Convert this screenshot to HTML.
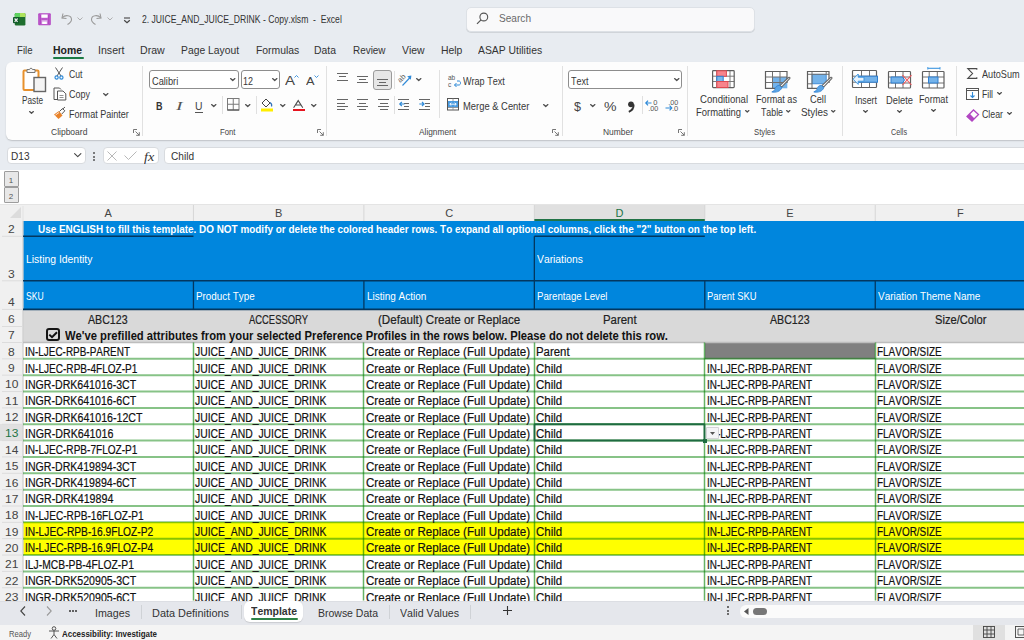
<!DOCTYPE html>
<html><head><meta charset="utf-8"><style>
html,body{margin:0;padding:0;width:1024px;height:640px;overflow:hidden;background:#e8ecf1;}
body{position:relative;font-family:"Liberation Sans",sans-serif;font-kerning:none;}
.t{position:absolute;white-space:nowrap;transform-origin:0 0;}
.b{position:absolute;box-sizing:border-box;}
svg.b{overflow:visible;}
</style></head><body>
<div class="b" style="left:0.00px;top:169.50px;width:1024.00px;height:431.00px;background:#fff"></div>
<div class="b" style="left:23.00px;top:221.00px;width:1001.00px;height:88.40px;background:#0086dd"></div>
<div class="b" style="left:23.00px;top:309.40px;width:1001.00px;height:33.10px;background:#d9d9d9"></div>
<div class="b" style="left:704.80px;top:342.50px;width:170.45px;height:16.35px;background:#808080"></div>
<div class="b" style="left:23.00px;top:522.35px;width:1001.00px;height:32.70px;background:#ffff00"></div>
<div class="b" style="left:0.00px;top:204.00px;width:1024.00px;height:17.00px;background:#f0f0f0"></div>
<div class="b" style="left:534.35px;top:204.00px;width:170.45px;height:17.00px;background:#e0e0e0"></div>
<div class="b" style="left:0.00px;top:221.00px;width:23.00px;height:379.50px;background:#f0f0f0"></div>
<div class="b" style="left:0.00px;top:424.25px;width:23.00px;height:16.35px;background:#e0e0e0"></div>
<svg class="b" style="left:0;top:0" width="1024" height="640"><line x1="193.45" y1="205.00" x2="193.45" y2="221.00" stroke="#d6d6d6" stroke-width="1.00"/><line x1="363.90" y1="205.00" x2="363.90" y2="221.00" stroke="#d6d6d6" stroke-width="1.00"/><line x1="534.35" y1="205.00" x2="534.35" y2="221.00" stroke="#d6d6d6" stroke-width="1.00"/><line x1="704.80" y1="205.00" x2="704.80" y2="221.00" stroke="#d6d6d6" stroke-width="1.00"/><line x1="875.25" y1="205.00" x2="875.25" y2="221.00" stroke="#d6d6d6" stroke-width="1.00"/><line x1="23.00" y1="221.00" x2="23.00" y2="600.50" stroke="#cfcfcf" stroke-width="1.30"/><line x1="23.00" y1="206.00" x2="23.00" y2="221.00" stroke="#e2e2e2" stroke-width="1.00"/><line x1="0.00" y1="204.50" x2="1024.00" y2="204.50" stroke="#e4e4e4" stroke-width="1.00"/><line x1="2.00" y1="236.30" x2="23.00" y2="236.30" stroke="#dcdcdc" stroke-width="1.00"/><line x1="2.00" y1="280.80" x2="23.00" y2="280.80" stroke="#dcdcdc" stroke-width="1.00"/><line x1="2.00" y1="309.40" x2="23.00" y2="309.40" stroke="#dcdcdc" stroke-width="1.00"/><line x1="2.00" y1="326.50" x2="23.00" y2="326.50" stroke="#dcdcdc" stroke-width="1.00"/><line x1="2.00" y1="342.50" x2="23.00" y2="342.50" stroke="#dcdcdc" stroke-width="1.00"/><line x1="2.00" y1="358.85" x2="23.00" y2="358.85" stroke="#dcdcdc" stroke-width="1.00"/><line x1="2.00" y1="375.20" x2="23.00" y2="375.20" stroke="#dcdcdc" stroke-width="1.00"/><line x1="2.00" y1="391.55" x2="23.00" y2="391.55" stroke="#dcdcdc" stroke-width="1.00"/><line x1="2.00" y1="407.90" x2="23.00" y2="407.90" stroke="#dcdcdc" stroke-width="1.00"/><line x1="2.00" y1="424.25" x2="23.00" y2="424.25" stroke="#dcdcdc" stroke-width="1.00"/><line x1="2.00" y1="440.60" x2="23.00" y2="440.60" stroke="#dcdcdc" stroke-width="1.00"/><line x1="2.00" y1="456.95" x2="23.00" y2="456.95" stroke="#dcdcdc" stroke-width="1.00"/><line x1="2.00" y1="473.30" x2="23.00" y2="473.30" stroke="#dcdcdc" stroke-width="1.00"/><line x1="2.00" y1="489.65" x2="23.00" y2="489.65" stroke="#dcdcdc" stroke-width="1.00"/><line x1="2.00" y1="506.00" x2="23.00" y2="506.00" stroke="#dcdcdc" stroke-width="1.00"/><line x1="2.00" y1="522.35" x2="23.00" y2="522.35" stroke="#dcdcdc" stroke-width="1.00"/><line x1="2.00" y1="538.70" x2="23.00" y2="538.70" stroke="#dcdcdc" stroke-width="1.00"/><line x1="2.00" y1="555.05" x2="23.00" y2="555.05" stroke="#dcdcdc" stroke-width="1.00"/><line x1="2.00" y1="571.40" x2="23.00" y2="571.40" stroke="#dcdcdc" stroke-width="1.00"/><line x1="2.00" y1="587.75" x2="23.00" y2="587.75" stroke="#dcdcdc" stroke-width="1.00"/><line x1="2.00" y1="604.10" x2="23.00" y2="604.10" stroke="#dcdcdc" stroke-width="1.00"/><line x1="23.00" y1="236.30" x2="193.45" y2="236.30" stroke="#03375f" stroke-width="1.40"/><line x1="534.35" y1="236.30" x2="704.80" y2="236.30" stroke="#03375f" stroke-width="1.40"/><line x1="534.35" y1="236.30" x2="534.35" y2="280.80" stroke="#03375f" stroke-width="1.30"/><line x1="23.00" y1="280.80" x2="1024.00" y2="280.80" stroke="#03375f" stroke-width="1.40"/><line x1="23.00" y1="309.40" x2="1024.00" y2="309.40" stroke="#03375f" stroke-width="1.60"/><line x1="193.45" y1="280.80" x2="193.45" y2="309.40" stroke="#03375f" stroke-width="1.30"/><line x1="363.90" y1="280.80" x2="363.90" y2="309.40" stroke="#03375f" stroke-width="1.30"/><line x1="534.35" y1="280.80" x2="534.35" y2="309.40" stroke="#03375f" stroke-width="1.30"/><line x1="704.80" y1="280.80" x2="704.80" y2="309.40" stroke="#03375f" stroke-width="1.30"/><line x1="875.25" y1="280.80" x2="875.25" y2="309.40" stroke="#03375f" stroke-width="1.30"/><line x1="23.00" y1="342.50" x2="1024.00" y2="342.50" stroke="#bdbdbd" stroke-width="1.60"/><line x1="23.00" y1="358.85" x2="1024.00" y2="358.85" stroke="rgba(0,128,0,0.47)" stroke-width="2.00"/><line x1="23.00" y1="375.20" x2="1024.00" y2="375.20" stroke="rgba(0,128,0,0.47)" stroke-width="2.00"/><line x1="23.00" y1="391.55" x2="1024.00" y2="391.55" stroke="rgba(0,128,0,0.47)" stroke-width="2.00"/><line x1="23.00" y1="407.90" x2="1024.00" y2="407.90" stroke="rgba(0,128,0,0.47)" stroke-width="2.00"/><line x1="23.00" y1="424.25" x2="1024.00" y2="424.25" stroke="rgba(0,128,0,0.47)" stroke-width="2.00"/><line x1="23.00" y1="440.60" x2="1024.00" y2="440.60" stroke="rgba(0,128,0,0.47)" stroke-width="2.00"/><line x1="23.00" y1="456.95" x2="1024.00" y2="456.95" stroke="rgba(0,128,0,0.47)" stroke-width="2.00"/><line x1="23.00" y1="473.30" x2="1024.00" y2="473.30" stroke="rgba(0,128,0,0.47)" stroke-width="2.00"/><line x1="23.00" y1="489.65" x2="1024.00" y2="489.65" stroke="rgba(0,128,0,0.47)" stroke-width="2.00"/><line x1="23.00" y1="506.00" x2="1024.00" y2="506.00" stroke="rgba(0,128,0,0.47)" stroke-width="2.00"/><line x1="23.00" y1="522.35" x2="1024.00" y2="522.35" stroke="rgba(0,128,0,0.47)" stroke-width="2.00"/><line x1="23.00" y1="538.70" x2="1024.00" y2="538.70" stroke="rgba(0,128,0,0.47)" stroke-width="2.00"/><line x1="23.00" y1="555.05" x2="1024.00" y2="555.05" stroke="rgba(0,128,0,0.47)" stroke-width="2.00"/><line x1="23.00" y1="571.40" x2="1024.00" y2="571.40" stroke="rgba(0,128,0,0.47)" stroke-width="2.00"/><line x1="23.00" y1="587.75" x2="1024.00" y2="587.75" stroke="rgba(0,128,0,0.47)" stroke-width="2.00"/><line x1="23.00" y1="604.10" x2="1024.00" y2="604.10" stroke="rgba(0,128,0,0.47)" stroke-width="2.00"/><line x1="193.50" y1="342.50" x2="193.50" y2="600.50" stroke="rgba(0,128,0,0.6)" stroke-width="1.50"/><line x1="363.50" y1="342.50" x2="363.50" y2="600.50" stroke="rgba(0,128,0,0.6)" stroke-width="1.50"/><line x1="534.50" y1="342.50" x2="534.50" y2="600.50" stroke="rgba(0,128,0,0.6)" stroke-width="1.50"/><line x1="704.50" y1="342.50" x2="704.50" y2="600.50" stroke="rgba(0,128,0,0.6)" stroke-width="1.50"/><line x1="875.50" y1="342.50" x2="875.50" y2="600.50" stroke="rgba(0,128,0,0.6)" stroke-width="1.50"/><line x1="534.35" y1="220.00" x2="704.80" y2="220.00" stroke="#217346" stroke-width="2.00"/><line x1="534.35" y1="424.25" x2="704.80" y2="424.25" stroke="#1e6b41" stroke-width="2.00"/><line x1="534.35" y1="440.60" x2="704.80" y2="440.60" stroke="#1e6b41" stroke-width="2.00"/><line x1="534.50" y1="424.25" x2="534.50" y2="440.60" stroke="#1e6b41" stroke-width="1.80"/><line x1="704.50" y1="424.25" x2="704.50" y2="440.60" stroke="#1e6b41" stroke-width="1.80"/></svg>
<div class="b" style="left:702.50px;top:438.60px;width:4.00px;height:4.00px;background:#1e6b41"></div>
<div class="t" style="left:104.56px;top:208.49px;font-size:11.00px;line-height:11.00px;color:#444;font-weight:normal;">A</div>
<div class="t" style="left:275.01px;top:208.49px;font-size:11.00px;line-height:11.00px;color:#444;font-weight:normal;">B</div>
<div class="t" style="left:445.15px;top:208.49px;font-size:11.00px;line-height:11.00px;color:#444;font-weight:normal;">C</div>
<div class="t" style="left:615.60px;top:208.49px;font-size:11.00px;line-height:11.00px;color:#217346;font-weight:normal;">D</div>
<div class="t" style="left:786.36px;top:208.49px;font-size:11.00px;line-height:11.00px;color:#444;font-weight:normal;">E</div>
<div class="t" style="left:957.12px;top:208.49px;font-size:11.00px;line-height:11.00px;color:#444;font-weight:normal;">F</div>
<div class="t" style="left:8.45px;top:224.16px;font-size:11.50px;line-height:11.50px;color:#444;font-weight:normal;transform:scaleX(1.0460);">2</div>
<div class="t" style="left:8.45px;top:268.66px;font-size:11.50px;line-height:11.50px;color:#444;font-weight:normal;transform:scaleX(1.0460);">3</div>
<div class="t" style="left:8.45px;top:297.26px;font-size:11.50px;line-height:11.50px;color:#444;font-weight:normal;transform:scaleX(1.0460);">4</div>
<div class="t" style="left:8.45px;top:314.36px;font-size:11.50px;line-height:11.50px;color:#444;font-weight:normal;transform:scaleX(1.0460);">6</div>
<div class="t" style="left:8.45px;top:330.36px;font-size:11.50px;line-height:11.50px;color:#444;font-weight:normal;transform:scaleX(1.0460);">7</div>
<div class="t" style="left:8.45px;top:346.71px;font-size:11.50px;line-height:11.50px;color:#444;font-weight:normal;transform:scaleX(1.0460);">8</div>
<div class="t" style="left:8.45px;top:363.06px;font-size:11.50px;line-height:11.50px;color:#444;font-weight:normal;transform:scaleX(1.0460);">9</div>
<div class="t" style="left:5.11px;top:379.41px;font-size:11.50px;line-height:11.50px;color:#444;font-weight:normal;transform:scaleX(1.0460);">10</div>
<div class="t" style="left:5.11px;top:395.76px;font-size:11.50px;line-height:11.50px;color:#444;font-weight:normal;transform:scaleX(1.0460);">11</div>
<div class="t" style="left:5.11px;top:412.11px;font-size:11.50px;line-height:11.50px;color:#444;font-weight:normal;transform:scaleX(1.0460);">12</div>
<div class="t" style="left:5.11px;top:428.46px;font-size:11.50px;line-height:11.50px;color:#217346;font-weight:normal;transform:scaleX(1.0460);">13</div>
<div class="t" style="left:5.11px;top:444.81px;font-size:11.50px;line-height:11.50px;color:#444;font-weight:normal;transform:scaleX(1.0460);">14</div>
<div class="t" style="left:5.11px;top:461.16px;font-size:11.50px;line-height:11.50px;color:#444;font-weight:normal;transform:scaleX(1.0460);">15</div>
<div class="t" style="left:5.11px;top:477.51px;font-size:11.50px;line-height:11.50px;color:#444;font-weight:normal;transform:scaleX(1.0460);">16</div>
<div class="t" style="left:5.11px;top:493.86px;font-size:11.50px;line-height:11.50px;color:#444;font-weight:normal;transform:scaleX(1.0460);">17</div>
<div class="t" style="left:5.11px;top:510.21px;font-size:11.50px;line-height:11.50px;color:#444;font-weight:normal;transform:scaleX(1.0460);">18</div>
<div class="t" style="left:5.11px;top:526.56px;font-size:11.50px;line-height:11.50px;color:#444;font-weight:normal;transform:scaleX(1.0460);">19</div>
<div class="t" style="left:5.11px;top:542.91px;font-size:11.50px;line-height:11.50px;color:#444;font-weight:normal;transform:scaleX(1.0460);">20</div>
<div class="t" style="left:5.11px;top:559.26px;font-size:11.50px;line-height:11.50px;color:#444;font-weight:normal;transform:scaleX(1.0460);">21</div>
<div class="t" style="left:5.11px;top:575.61px;font-size:11.50px;line-height:11.50px;color:#444;font-weight:normal;transform:scaleX(1.0460);">22</div>
<div class="t" style="left:5.11px;top:591.96px;font-size:11.50px;line-height:11.50px;color:#444;font-weight:normal;transform:scaleX(1.0460);">23</div>
<svg class="b" style="left:9.00px;top:207.00px" width="13" height="12" viewBox="0 0 13 12"><path d="M12 0 L12 11 L1 11 Z" fill="#dcdcdc"/></svg>
<div class="t" style="left:38.00px;top:225.16px;font-size:10.20px;line-height:10.20px;color:#fff;font-weight:bold;transform:scaleX(0.9744);">Use ENGLISH to fill this template. DO NOT modify or delete the colored header rows. To expand all optional columns, click the &quot;2&quot; button on the top left.</div>
<div class="t" style="left:25.50px;top:254.66px;font-size:10.20px;line-height:10.20px;color:#fff;font-weight:normal;transform:scaleX(1.0199);">Listing Identity</div>
<div class="t" style="left:537.00px;top:254.66px;font-size:10.20px;line-height:10.20px;color:#fff;font-weight:normal;transform:scaleX(1.0142);">Variations</div>
<div class="t" style="left:25.60px;top:292.16px;font-size:10.20px;line-height:10.20px;color:#fff;font-weight:normal;transform:scaleX(0.8423);">SKU</div>
<div class="t" style="left:196.05px;top:292.16px;font-size:10.20px;line-height:10.20px;color:#fff;font-weight:normal;transform:scaleX(0.9685);">Product Type</div>
<div class="t" style="left:366.50px;top:292.16px;font-size:10.20px;line-height:10.20px;color:#fff;font-weight:normal;transform:scaleX(0.9785);">Listing Action</div>
<div class="t" style="left:536.95px;top:292.16px;font-size:10.20px;line-height:10.20px;color:#fff;font-weight:normal;transform:scaleX(0.9496);">Parentage Level</div>
<div class="t" style="left:707.40px;top:292.16px;font-size:10.20px;line-height:10.20px;color:#fff;font-weight:normal;transform:scaleX(0.9206);">Parent SKU</div>
<div class="t" style="left:877.85px;top:292.16px;font-size:10.20px;line-height:10.20px;color:#fff;font-weight:normal;transform:scaleX(0.9770);">Variation Theme Name</div>
<div class="t" style="left:88.45px;top:313.64px;font-size:12.00px;line-height:12.00px;color:#222;font-weight:normal;transform:scaleX(0.8848);-webkit-text-stroke:0.2px #222;">ABC123</div>
<div class="t" style="left:249.14px;top:313.64px;font-size:12.00px;line-height:12.00px;color:#222;font-weight:normal;transform:scaleX(0.7839);-webkit-text-stroke:0.2px #222;">ACCESSORY</div>
<div class="t" style="left:378.02px;top:313.64px;font-size:12.00px;line-height:12.00px;color:#222;font-weight:normal;transform:scaleX(0.9691);-webkit-text-stroke:0.2px #222;">(Default) Create or Replace</div>
<div class="t" style="left:602.75px;top:313.64px;font-size:12.00px;line-height:12.00px;color:#222;font-weight:normal;transform:scaleX(0.9515);-webkit-text-stroke:0.2px #222;">Parent</div>
<div class="t" style="left:770.25px;top:313.64px;font-size:12.00px;line-height:12.00px;color:#222;font-weight:normal;transform:scaleX(0.8848);-webkit-text-stroke:0.2px #222;">ABC123</div>
<div class="t" style="left:934.74px;top:313.64px;font-size:12.00px;line-height:12.00px;color:#222;font-weight:normal;transform:scaleX(0.9298);-webkit-text-stroke:0.2px #222;">Size/Color</div>
<div class="b" style="left:45.80px;top:328.30px;width:14.20px;height:12.60px;border:2px solid #151515;border-radius:3px"></div>
<svg class="b" style="left:47.00px;top:329.50px" width="12" height="10" viewBox="0 0 12 10"><path d="M2.3 4.6 L5 7.2 L10 2.2" fill="none" stroke="#111" stroke-width="2"/></svg>
<div class="t" style="left:65.00px;top:329.94px;font-size:12.00px;line-height:12.00px;color:#111;font-weight:bold;transform:scaleX(0.9348);">We&#x27;ve prefilled attributes from your selected Preference Profiles in the rows below. Please do not delete this row.</div>
<div class="t" style="left:24.90px;top:346.29px;font-size:12.00px;line-height:12.00px;color:#111;font-weight:normal;transform:scaleX(0.8289);-webkit-text-stroke:0.2px #111;">IN-LJEC-RPB-PARENT</div>
<div class="t" style="left:195.35px;top:346.29px;font-size:12.00px;line-height:12.00px;color:#111;font-weight:normal;transform:scaleX(0.8643);-webkit-text-stroke:0.2px #111;">JUICE_AND_JUICE_DRINK</div>
<div class="t" style="left:365.80px;top:346.29px;font-size:12.00px;line-height:12.00px;color:#111;font-weight:normal;transform:scaleX(0.9643);-webkit-text-stroke:0.2px #111;">Create or Replace (Full Update)</div>
<div class="t" style="left:536.25px;top:346.29px;font-size:12.00px;line-height:12.00px;color:#111;font-weight:normal;transform:scaleX(0.9515);-webkit-text-stroke:0.2px #111;">Parent</div>
<div class="t" style="left:877.15px;top:346.29px;font-size:12.00px;line-height:12.00px;color:#111;font-weight:normal;transform:scaleX(0.8293);-webkit-text-stroke:0.2px #111;">FLAVOR/SIZE</div>
<div class="t" style="left:24.90px;top:362.64px;font-size:12.00px;line-height:12.00px;color:#111;font-weight:normal;transform:scaleX(0.8386);-webkit-text-stroke:0.2px #111;">IN-LJEC-RPB-4FLOZ-P1</div>
<div class="t" style="left:195.35px;top:362.64px;font-size:12.00px;line-height:12.00px;color:#111;font-weight:normal;transform:scaleX(0.8643);-webkit-text-stroke:0.2px #111;">JUICE_AND_JUICE_DRINK</div>
<div class="t" style="left:365.80px;top:362.64px;font-size:12.00px;line-height:12.00px;color:#111;font-weight:normal;transform:scaleX(0.9643);-webkit-text-stroke:0.2px #111;">Create or Replace (Full Update)</div>
<div class="t" style="left:536.25px;top:362.64px;font-size:12.00px;line-height:12.00px;color:#111;font-weight:normal;transform:scaleX(0.9581);-webkit-text-stroke:0.2px #111;">Child</div>
<div class="t" style="left:706.70px;top:362.64px;font-size:12.00px;line-height:12.00px;color:#111;font-weight:normal;transform:scaleX(0.8289);-webkit-text-stroke:0.2px #111;">IN-LJEC-RPB-PARENT</div>
<div class="t" style="left:877.15px;top:362.64px;font-size:12.00px;line-height:12.00px;color:#111;font-weight:normal;transform:scaleX(0.8293);-webkit-text-stroke:0.2px #111;">FLAVOR/SIZE</div>
<div class="t" style="left:24.90px;top:378.99px;font-size:12.00px;line-height:12.00px;color:#111;font-weight:normal;transform:scaleX(0.8820);-webkit-text-stroke:0.2px #111;">INGR-DRK641016-3CT</div>
<div class="t" style="left:195.35px;top:378.99px;font-size:12.00px;line-height:12.00px;color:#111;font-weight:normal;transform:scaleX(0.8643);-webkit-text-stroke:0.2px #111;">JUICE_AND_JUICE_DRINK</div>
<div class="t" style="left:365.80px;top:378.99px;font-size:12.00px;line-height:12.00px;color:#111;font-weight:normal;transform:scaleX(0.9643);-webkit-text-stroke:0.2px #111;">Create or Replace (Full Update)</div>
<div class="t" style="left:536.25px;top:378.99px;font-size:12.00px;line-height:12.00px;color:#111;font-weight:normal;transform:scaleX(0.9581);-webkit-text-stroke:0.2px #111;">Child</div>
<div class="t" style="left:706.70px;top:378.99px;font-size:12.00px;line-height:12.00px;color:#111;font-weight:normal;transform:scaleX(0.8289);-webkit-text-stroke:0.2px #111;">IN-LJEC-RPB-PARENT</div>
<div class="t" style="left:877.15px;top:378.99px;font-size:12.00px;line-height:12.00px;color:#111;font-weight:normal;transform:scaleX(0.8293);-webkit-text-stroke:0.2px #111;">FLAVOR/SIZE</div>
<div class="t" style="left:24.90px;top:395.34px;font-size:12.00px;line-height:12.00px;color:#111;font-weight:normal;transform:scaleX(0.8830);-webkit-text-stroke:0.2px #111;">INGR-DRK641016-6CT</div>
<div class="t" style="left:195.35px;top:395.34px;font-size:12.00px;line-height:12.00px;color:#111;font-weight:normal;transform:scaleX(0.8643);-webkit-text-stroke:0.2px #111;">JUICE_AND_JUICE_DRINK</div>
<div class="t" style="left:365.80px;top:395.34px;font-size:12.00px;line-height:12.00px;color:#111;font-weight:normal;transform:scaleX(0.9643);-webkit-text-stroke:0.2px #111;">Create or Replace (Full Update)</div>
<div class="t" style="left:536.25px;top:395.34px;font-size:12.00px;line-height:12.00px;color:#111;font-weight:normal;transform:scaleX(0.9581);-webkit-text-stroke:0.2px #111;">Child</div>
<div class="t" style="left:706.70px;top:395.34px;font-size:12.00px;line-height:12.00px;color:#111;font-weight:normal;transform:scaleX(0.8289);-webkit-text-stroke:0.2px #111;">IN-LJEC-RPB-PARENT</div>
<div class="t" style="left:877.15px;top:395.34px;font-size:12.00px;line-height:12.00px;color:#111;font-weight:normal;transform:scaleX(0.8293);-webkit-text-stroke:0.2px #111;">FLAVOR/SIZE</div>
<div class="t" style="left:24.90px;top:411.69px;font-size:12.00px;line-height:12.00px;color:#111;font-weight:normal;transform:scaleX(0.8852);-webkit-text-stroke:0.2px #111;">INGR-DRK641016-12CT</div>
<div class="t" style="left:195.35px;top:411.69px;font-size:12.00px;line-height:12.00px;color:#111;font-weight:normal;transform:scaleX(0.8643);-webkit-text-stroke:0.2px #111;">JUICE_AND_JUICE_DRINK</div>
<div class="t" style="left:365.80px;top:411.69px;font-size:12.00px;line-height:12.00px;color:#111;font-weight:normal;transform:scaleX(0.9643);-webkit-text-stroke:0.2px #111;">Create or Replace (Full Update)</div>
<div class="t" style="left:536.25px;top:411.69px;font-size:12.00px;line-height:12.00px;color:#111;font-weight:normal;transform:scaleX(0.9581);-webkit-text-stroke:0.2px #111;">Child</div>
<div class="t" style="left:706.70px;top:411.69px;font-size:12.00px;line-height:12.00px;color:#111;font-weight:normal;transform:scaleX(0.8289);-webkit-text-stroke:0.2px #111;">IN-LJEC-RPB-PARENT</div>
<div class="t" style="left:877.15px;top:411.69px;font-size:12.00px;line-height:12.00px;color:#111;font-weight:normal;transform:scaleX(0.8293);-webkit-text-stroke:0.2px #111;">FLAVOR/SIZE</div>
<div class="t" style="left:24.90px;top:428.04px;font-size:12.00px;line-height:12.00px;color:#111;font-weight:normal;transform:scaleX(0.8890);-webkit-text-stroke:0.2px #111;">INGR-DRK641016</div>
<div class="t" style="left:195.35px;top:428.04px;font-size:12.00px;line-height:12.00px;color:#111;font-weight:normal;transform:scaleX(0.8643);-webkit-text-stroke:0.2px #111;">JUICE_AND_JUICE_DRINK</div>
<div class="t" style="left:365.80px;top:428.04px;font-size:12.00px;line-height:12.00px;color:#111;font-weight:normal;transform:scaleX(0.9643);-webkit-text-stroke:0.2px #111;">Create or Replace (Full Update)</div>
<div class="t" style="left:536.25px;top:428.04px;font-size:12.00px;line-height:12.00px;color:#111;font-weight:normal;transform:scaleX(0.9581);-webkit-text-stroke:0.2px #111;">Child</div>
<div class="t" style="left:706.70px;top:428.04px;font-size:12.00px;line-height:12.00px;color:#111;font-weight:normal;transform:scaleX(0.8289);-webkit-text-stroke:0.2px #111;">IN-LJEC-RPB-PARENT</div>
<div class="t" style="left:877.15px;top:428.04px;font-size:12.00px;line-height:12.00px;color:#111;font-weight:normal;transform:scaleX(0.8293);-webkit-text-stroke:0.2px #111;">FLAVOR/SIZE</div>
<div class="t" style="left:24.90px;top:444.39px;font-size:12.00px;line-height:12.00px;color:#111;font-weight:normal;transform:scaleX(0.8386);-webkit-text-stroke:0.2px #111;">IN-LJEC-RPB-7FLOZ-P1</div>
<div class="t" style="left:195.35px;top:444.39px;font-size:12.00px;line-height:12.00px;color:#111;font-weight:normal;transform:scaleX(0.8643);-webkit-text-stroke:0.2px #111;">JUICE_AND_JUICE_DRINK</div>
<div class="t" style="left:365.80px;top:444.39px;font-size:12.00px;line-height:12.00px;color:#111;font-weight:normal;transform:scaleX(0.9643);-webkit-text-stroke:0.2px #111;">Create or Replace (Full Update)</div>
<div class="t" style="left:536.25px;top:444.39px;font-size:12.00px;line-height:12.00px;color:#111;font-weight:normal;transform:scaleX(0.9581);-webkit-text-stroke:0.2px #111;">Child</div>
<div class="t" style="left:706.70px;top:444.39px;font-size:12.00px;line-height:12.00px;color:#111;font-weight:normal;transform:scaleX(0.8289);-webkit-text-stroke:0.2px #111;">IN-LJEC-RPB-PARENT</div>
<div class="t" style="left:877.15px;top:444.39px;font-size:12.00px;line-height:12.00px;color:#111;font-weight:normal;transform:scaleX(0.8293);-webkit-text-stroke:0.2px #111;">FLAVOR/SIZE</div>
<div class="t" style="left:24.90px;top:460.74px;font-size:12.00px;line-height:12.00px;color:#111;font-weight:normal;transform:scaleX(0.8820);-webkit-text-stroke:0.2px #111;">INGR-DRK419894-3CT</div>
<div class="t" style="left:195.35px;top:460.74px;font-size:12.00px;line-height:12.00px;color:#111;font-weight:normal;transform:scaleX(0.8643);-webkit-text-stroke:0.2px #111;">JUICE_AND_JUICE_DRINK</div>
<div class="t" style="left:365.80px;top:460.74px;font-size:12.00px;line-height:12.00px;color:#111;font-weight:normal;transform:scaleX(0.9643);-webkit-text-stroke:0.2px #111;">Create or Replace (Full Update)</div>
<div class="t" style="left:536.25px;top:460.74px;font-size:12.00px;line-height:12.00px;color:#111;font-weight:normal;transform:scaleX(0.9581);-webkit-text-stroke:0.2px #111;">Child</div>
<div class="t" style="left:706.70px;top:460.74px;font-size:12.00px;line-height:12.00px;color:#111;font-weight:normal;transform:scaleX(0.8289);-webkit-text-stroke:0.2px #111;">IN-LJEC-RPB-PARENT</div>
<div class="t" style="left:877.15px;top:460.74px;font-size:12.00px;line-height:12.00px;color:#111;font-weight:normal;transform:scaleX(0.8293);-webkit-text-stroke:0.2px #111;">FLAVOR/SIZE</div>
<div class="t" style="left:24.90px;top:477.09px;font-size:12.00px;line-height:12.00px;color:#111;font-weight:normal;transform:scaleX(0.8820);-webkit-text-stroke:0.2px #111;">INGR-DRK419894-6CT</div>
<div class="t" style="left:195.35px;top:477.09px;font-size:12.00px;line-height:12.00px;color:#111;font-weight:normal;transform:scaleX(0.8643);-webkit-text-stroke:0.2px #111;">JUICE_AND_JUICE_DRINK</div>
<div class="t" style="left:365.80px;top:477.09px;font-size:12.00px;line-height:12.00px;color:#111;font-weight:normal;transform:scaleX(0.9643);-webkit-text-stroke:0.2px #111;">Create or Replace (Full Update)</div>
<div class="t" style="left:536.25px;top:477.09px;font-size:12.00px;line-height:12.00px;color:#111;font-weight:normal;transform:scaleX(0.9581);-webkit-text-stroke:0.2px #111;">Child</div>
<div class="t" style="left:706.70px;top:477.09px;font-size:12.00px;line-height:12.00px;color:#111;font-weight:normal;transform:scaleX(0.8289);-webkit-text-stroke:0.2px #111;">IN-LJEC-RPB-PARENT</div>
<div class="t" style="left:877.15px;top:477.09px;font-size:12.00px;line-height:12.00px;color:#111;font-weight:normal;transform:scaleX(0.8293);-webkit-text-stroke:0.2px #111;">FLAVOR/SIZE</div>
<div class="t" style="left:24.90px;top:493.44px;font-size:12.00px;line-height:12.00px;color:#111;font-weight:normal;transform:scaleX(0.8890);-webkit-text-stroke:0.2px #111;">INGR-DRK419894</div>
<div class="t" style="left:195.35px;top:493.44px;font-size:12.00px;line-height:12.00px;color:#111;font-weight:normal;transform:scaleX(0.8643);-webkit-text-stroke:0.2px #111;">JUICE_AND_JUICE_DRINK</div>
<div class="t" style="left:365.80px;top:493.44px;font-size:12.00px;line-height:12.00px;color:#111;font-weight:normal;transform:scaleX(0.9643);-webkit-text-stroke:0.2px #111;">Create or Replace (Full Update)</div>
<div class="t" style="left:536.25px;top:493.44px;font-size:12.00px;line-height:12.00px;color:#111;font-weight:normal;transform:scaleX(0.9581);-webkit-text-stroke:0.2px #111;">Child</div>
<div class="t" style="left:706.70px;top:493.44px;font-size:12.00px;line-height:12.00px;color:#111;font-weight:normal;transform:scaleX(0.8289);-webkit-text-stroke:0.2px #111;">IN-LJEC-RPB-PARENT</div>
<div class="t" style="left:877.15px;top:493.44px;font-size:12.00px;line-height:12.00px;color:#111;font-weight:normal;transform:scaleX(0.8293);-webkit-text-stroke:0.2px #111;">FLAVOR/SIZE</div>
<div class="t" style="left:24.90px;top:509.79px;font-size:12.00px;line-height:12.00px;color:#111;font-weight:normal;transform:scaleX(0.8436);-webkit-text-stroke:0.2px #111;">IN-LJEC-RPB-16FLOZ-P1</div>
<div class="t" style="left:195.35px;top:509.79px;font-size:12.00px;line-height:12.00px;color:#111;font-weight:normal;transform:scaleX(0.8643);-webkit-text-stroke:0.2px #111;">JUICE_AND_JUICE_DRINK</div>
<div class="t" style="left:365.80px;top:509.79px;font-size:12.00px;line-height:12.00px;color:#111;font-weight:normal;transform:scaleX(0.9643);-webkit-text-stroke:0.2px #111;">Create or Replace (Full Update)</div>
<div class="t" style="left:536.25px;top:509.79px;font-size:12.00px;line-height:12.00px;color:#111;font-weight:normal;transform:scaleX(0.9581);-webkit-text-stroke:0.2px #111;">Child</div>
<div class="t" style="left:706.70px;top:509.79px;font-size:12.00px;line-height:12.00px;color:#111;font-weight:normal;transform:scaleX(0.8289);-webkit-text-stroke:0.2px #111;">IN-LJEC-RPB-PARENT</div>
<div class="t" style="left:877.15px;top:509.79px;font-size:12.00px;line-height:12.00px;color:#111;font-weight:normal;transform:scaleX(0.8293);-webkit-text-stroke:0.2px #111;">FLAVOR/SIZE</div>
<div class="t" style="left:24.90px;top:526.14px;font-size:12.00px;line-height:12.00px;color:#111;font-weight:normal;transform:scaleX(0.8503);-webkit-text-stroke:0.2px #111;">IN-LJEC-RPB-16.9FLOZ-P2</div>
<div class="t" style="left:195.35px;top:526.14px;font-size:12.00px;line-height:12.00px;color:#111;font-weight:normal;transform:scaleX(0.8643);-webkit-text-stroke:0.2px #111;">JUICE_AND_JUICE_DRINK</div>
<div class="t" style="left:365.80px;top:526.14px;font-size:12.00px;line-height:12.00px;color:#111;font-weight:normal;transform:scaleX(0.9643);-webkit-text-stroke:0.2px #111;">Create or Replace (Full Update)</div>
<div class="t" style="left:536.25px;top:526.14px;font-size:12.00px;line-height:12.00px;color:#111;font-weight:normal;transform:scaleX(0.9581);-webkit-text-stroke:0.2px #111;">Child</div>
<div class="t" style="left:706.70px;top:526.14px;font-size:12.00px;line-height:12.00px;color:#111;font-weight:normal;transform:scaleX(0.8289);-webkit-text-stroke:0.2px #111;">IN-LJEC-RPB-PARENT</div>
<div class="t" style="left:877.15px;top:526.14px;font-size:12.00px;line-height:12.00px;color:#111;font-weight:normal;transform:scaleX(0.8293);-webkit-text-stroke:0.2px #111;">FLAVOR/SIZE</div>
<div class="t" style="left:24.90px;top:542.49px;font-size:12.00px;line-height:12.00px;color:#111;font-weight:normal;transform:scaleX(0.8503);-webkit-text-stroke:0.2px #111;">IN-LJEC-RPB-16.9FLOZ-P4</div>
<div class="t" style="left:195.35px;top:542.49px;font-size:12.00px;line-height:12.00px;color:#111;font-weight:normal;transform:scaleX(0.8643);-webkit-text-stroke:0.2px #111;">JUICE_AND_JUICE_DRINK</div>
<div class="t" style="left:365.80px;top:542.49px;font-size:12.00px;line-height:12.00px;color:#111;font-weight:normal;transform:scaleX(0.9643);-webkit-text-stroke:0.2px #111;">Create or Replace (Full Update)</div>
<div class="t" style="left:536.25px;top:542.49px;font-size:12.00px;line-height:12.00px;color:#111;font-weight:normal;transform:scaleX(0.9581);-webkit-text-stroke:0.2px #111;">Child</div>
<div class="t" style="left:706.70px;top:542.49px;font-size:12.00px;line-height:12.00px;color:#111;font-weight:normal;transform:scaleX(0.8289);-webkit-text-stroke:0.2px #111;">IN-LJEC-RPB-PARENT</div>
<div class="t" style="left:877.15px;top:542.49px;font-size:12.00px;line-height:12.00px;color:#111;font-weight:normal;transform:scaleX(0.8293);-webkit-text-stroke:0.2px #111;">FLAVOR/SIZE</div>
<div class="t" style="left:24.90px;top:558.84px;font-size:12.00px;line-height:12.00px;color:#111;font-weight:normal;transform:scaleX(0.8598);-webkit-text-stroke:0.2px #111;">ILJ-MCB-PB-4FLOZ-P1</div>
<div class="t" style="left:195.35px;top:558.84px;font-size:12.00px;line-height:12.00px;color:#111;font-weight:normal;transform:scaleX(0.8643);-webkit-text-stroke:0.2px #111;">JUICE_AND_JUICE_DRINK</div>
<div class="t" style="left:365.80px;top:558.84px;font-size:12.00px;line-height:12.00px;color:#111;font-weight:normal;transform:scaleX(0.9643);-webkit-text-stroke:0.2px #111;">Create or Replace (Full Update)</div>
<div class="t" style="left:536.25px;top:558.84px;font-size:12.00px;line-height:12.00px;color:#111;font-weight:normal;transform:scaleX(0.9581);-webkit-text-stroke:0.2px #111;">Child</div>
<div class="t" style="left:706.70px;top:558.84px;font-size:12.00px;line-height:12.00px;color:#111;font-weight:normal;transform:scaleX(0.8289);-webkit-text-stroke:0.2px #111;">IN-LJEC-RPB-PARENT</div>
<div class="t" style="left:877.15px;top:558.84px;font-size:12.00px;line-height:12.00px;color:#111;font-weight:normal;transform:scaleX(0.8293);-webkit-text-stroke:0.2px #111;">FLAVOR/SIZE</div>
<div class="t" style="left:24.90px;top:575.19px;font-size:12.00px;line-height:12.00px;color:#111;font-weight:normal;transform:scaleX(0.8820);-webkit-text-stroke:0.2px #111;">INGR-DRK520905-3CT</div>
<div class="t" style="left:195.35px;top:575.19px;font-size:12.00px;line-height:12.00px;color:#111;font-weight:normal;transform:scaleX(0.8643);-webkit-text-stroke:0.2px #111;">JUICE_AND_JUICE_DRINK</div>
<div class="t" style="left:365.80px;top:575.19px;font-size:12.00px;line-height:12.00px;color:#111;font-weight:normal;transform:scaleX(0.9643);-webkit-text-stroke:0.2px #111;">Create or Replace (Full Update)</div>
<div class="t" style="left:536.25px;top:575.19px;font-size:12.00px;line-height:12.00px;color:#111;font-weight:normal;transform:scaleX(0.9581);-webkit-text-stroke:0.2px #111;">Child</div>
<div class="t" style="left:706.70px;top:575.19px;font-size:12.00px;line-height:12.00px;color:#111;font-weight:normal;transform:scaleX(0.8289);-webkit-text-stroke:0.2px #111;">IN-LJEC-RPB-PARENT</div>
<div class="t" style="left:877.15px;top:575.19px;font-size:12.00px;line-height:12.00px;color:#111;font-weight:normal;transform:scaleX(0.8293);-webkit-text-stroke:0.2px #111;">FLAVOR/SIZE</div>
<div class="t" style="left:24.90px;top:591.54px;font-size:12.00px;line-height:12.00px;color:#111;font-weight:normal;transform:scaleX(0.8820);-webkit-text-stroke:0.2px #111;">INGR-DRK520905-6CT</div>
<div class="t" style="left:195.35px;top:591.54px;font-size:12.00px;line-height:12.00px;color:#111;font-weight:normal;transform:scaleX(0.8643);-webkit-text-stroke:0.2px #111;">JUICE_AND_JUICE_DRINK</div>
<div class="t" style="left:365.80px;top:591.54px;font-size:12.00px;line-height:12.00px;color:#111;font-weight:normal;transform:scaleX(0.9643);-webkit-text-stroke:0.2px #111;">Create or Replace (Full Update)</div>
<div class="t" style="left:536.25px;top:591.54px;font-size:12.00px;line-height:12.00px;color:#111;font-weight:normal;transform:scaleX(0.9581);-webkit-text-stroke:0.2px #111;">Child</div>
<div class="t" style="left:706.70px;top:591.54px;font-size:12.00px;line-height:12.00px;color:#111;font-weight:normal;transform:scaleX(0.8289);-webkit-text-stroke:0.2px #111;">IN-LJEC-RPB-PARENT</div>
<div class="t" style="left:877.15px;top:591.54px;font-size:12.00px;line-height:12.00px;color:#111;font-weight:normal;transform:scaleX(0.8293);-webkit-text-stroke:0.2px #111;">FLAVOR/SIZE</div>
<svg class="b" style="left:12.50px;top:12.50px" width="12.5" height="12.5" viewBox="0 0 12.5 12.5"><rect x="1.8" y="0" width="10.6" height="12.4" rx="1.2" fill="#1e6e2e"/><path d="M3 0 H7 V4 H1.8 V1.2 Q1.8 0 3 0 Z" fill="#5fd35f"/><path d="M7 0 H11.2 Q12.4 0 12.4 1.2 V4 H7 Z" fill="#aee35c"/><rect x="0" y="4" width="6.2" height="6.2" rx="0.9" fill="#0f5a28"/><path d="M1.6 5.5 L4.6 8.8 M4.6 5.5 L1.6 8.8" stroke="#f0f0f0" stroke-width="1.2"/></svg>
<svg class="b" style="left:37.50px;top:12.50px" width="13" height="12.5" viewBox="0 0 13 12.5"><rect x="0.2" y="0.2" width="12.6" height="12.1" rx="1" fill="#b446c4"/><rect x="1.8" y="1.4" width="9.4" height="9.8" fill="#d8a3e3"/><rect x="1.8" y="1.4" width="1.6" height="9.8" fill="#b446c4"/><rect x="9.6" y="1.4" width="1.6" height="9.8" fill="#b446c4"/><rect x="3.4" y="5.2" width="6.2" height="1.6" fill="#b446c4"/><rect x="3.4" y="1.6" width="6.2" height="3" fill="#fff"/><rect x="4.2" y="8.6" width="4.6" height="2.4" fill="#fff"/></svg>
<svg class="b" style="left:60.00px;top:12.00px" width="13" height="13" viewBox="0 0 13 13"><path d="M3 1.5 L2 6 L6.5 6.5" fill="none" stroke="#9a9a9a" stroke-width="1.1"/><path d="M2.3 5.8 C5 2.5 11.5 3 11.5 7.5 C11.5 10 9.5 11.3 7.5 12.5" fill="none" stroke="#9a9a9a" stroke-width="1.1"/></svg>
<svg class="b" style="left:77.00px;top:17.00px" width="6" height="4" viewBox="0 0 6 4"><path d="M0.5 0.5 L3 3 L5.5 0.5" fill="none" stroke="#a8a8a8" stroke-width="0.9"/></svg>
<svg class="b" style="left:90.00px;top:12.00px" width="13" height="13" viewBox="0 0 13 13"><path d="M10 1.5 L11 6 L6.5 6.5" fill="none" stroke="#9a9a9a" stroke-width="1.1"/><path d="M10.7 5.8 C8 2.5 1.5 3 1.5 7.5 C1.5 10 3.5 11.3 5.5 12.5" fill="none" stroke="#9a9a9a" stroke-width="1.1"/></svg>
<svg class="b" style="left:107.00px;top:17.00px" width="6" height="4" viewBox="0 0 6 4"><path d="M0.5 0.5 L3 3 L5.5 0.5" fill="none" stroke="#a8a8a8" stroke-width="0.9"/></svg>
<svg class="b" style="left:123.00px;top:16.50px" width="8" height="7" viewBox="0 0 8 7"><path d="M1 1 H7" stroke="#444" stroke-width="1.1"/><path d="M1.2 3.3 L4 5.8 L6.8 3.3" fill="none" stroke="#444" stroke-width="1.2"/></svg>
<div class="t" style="left:141.80px;top:14.49px;font-size:11.00px;line-height:11.00px;color:#333;font-weight:normal;transform:scaleX(0.7820);white-space:pre;">2. JUICE_AND_JUICE_DRINK - Copy.xlsm  -  Excel</div>
<div class="b" style="left:466.00px;top:7.00px;width:289.00px;height:24.50px;background:#f9f9fa;border:1px solid #dde1e6;border-radius:5px;box-shadow:0 1px 0 #d0d4d9"></div>
<svg class="b" style="left:476.00px;top:12.00px" width="13" height="13" viewBox="0 0 13 13"><circle cx="7.8" cy="5" r="3.9" fill="none" stroke="#555" stroke-width="1.1"/><path d="M5 7.8 L1 11.8" stroke="#555" stroke-width="1.2"/></svg>
<div class="t" style="left:498.50px;top:13.36px;font-size:11.50px;line-height:11.50px;color:#6a6a6a;font-weight:normal;transform:scaleX(0.8782);">Search</div>
<div class="t" style="left:16.50px;top:45.49px;font-size:11.00px;line-height:11.00px;color:#333;font-weight:normal;transform:scaleX(0.8745);">File</div>
<div class="t" style="left:53.00px;top:45.49px;font-size:11.00px;line-height:11.00px;color:#222;font-weight:bold;transform:scaleX(0.9489);">Home</div>
<div class="t" style="left:97.50px;top:45.49px;font-size:11.00px;line-height:11.00px;color:#333;font-weight:normal;transform:scaleX(0.9633);">Insert</div>
<div class="t" style="left:140.30px;top:45.49px;font-size:11.00px;line-height:11.00px;color:#333;font-weight:normal;transform:scaleX(0.9623);">Draw</div>
<div class="t" style="left:180.90px;top:45.49px;font-size:11.00px;line-height:11.00px;color:#333;font-weight:normal;transform:scaleX(0.9389);">Page Layout</div>
<div class="t" style="left:255.70px;top:45.49px;font-size:11.00px;line-height:11.00px;color:#333;font-weight:normal;transform:scaleX(0.9445);">Formulas</div>
<div class="t" style="left:314.30px;top:45.49px;font-size:11.00px;line-height:11.00px;color:#333;font-weight:normal;transform:scaleX(0.9425);">Data</div>
<div class="t" style="left:353.30px;top:45.49px;font-size:11.00px;line-height:11.00px;color:#333;font-weight:normal;transform:scaleX(0.9011);">Review</div>
<div class="t" style="left:402.30px;top:45.49px;font-size:11.00px;line-height:11.00px;color:#333;font-weight:normal;transform:scaleX(0.9479);">View</div>
<div class="t" style="left:441.00px;top:45.49px;font-size:11.00px;line-height:11.00px;color:#333;font-weight:normal;transform:scaleX(0.9459);">Help</div>
<div class="t" style="left:477.90px;top:45.49px;font-size:11.00px;line-height:11.00px;color:#333;font-weight:normal;transform:scaleX(0.9447);">ASAP Utilities</div>
<div class="b" style="left:53.00px;top:57.00px;width:30.50px;height:2.20px;background:#1b7a44;border-radius:1px"></div>
<div class="b" style="left:6.00px;top:62.00px;width:1030.00px;height:78.00px;background:#fdfdfd;border-radius:6px;box-shadow:0 1px 1.5px rgba(0,0,0,0.18)"></div>
<div class="b" style="left:142.00px;top:66.00px;width:1.00px;height:70.00px;background:#e1e1e1"></div>
<div class="b" style="left:325.60px;top:66.00px;width:1.00px;height:70.00px;background:#e1e1e1"></div>
<div class="b" style="left:561.90px;top:66.00px;width:1.00px;height:70.00px;background:#e1e1e1"></div>
<div class="b" style="left:687.00px;top:66.00px;width:1.00px;height:70.00px;background:#e1e1e1"></div>
<div class="b" style="left:842.00px;top:66.00px;width:1.00px;height:70.00px;background:#e1e1e1"></div>
<div class="b" style="left:956.30px;top:66.00px;width:1.00px;height:70.00px;background:#e1e1e1"></div>
<div class="t" style="left:51.00px;top:127.00px;font-size:9.80px;line-height:9.80px;color:#444;font-weight:normal;transform:scaleX(0.8678);">Clipboard</div>
<div class="t" style="left:219.50px;top:127.00px;font-size:9.80px;line-height:9.80px;color:#444;font-weight:normal;transform:scaleX(0.7904);">Font</div>
<div class="t" style="left:419.00px;top:127.00px;font-size:9.80px;line-height:9.80px;color:#444;font-weight:normal;transform:scaleX(0.8490);">Alignment</div>
<div class="t" style="left:603.00px;top:127.00px;font-size:9.80px;line-height:9.80px;color:#444;font-weight:normal;transform:scaleX(0.8607);">Number</div>
<div class="t" style="left:754.00px;top:127.00px;font-size:9.80px;line-height:9.80px;color:#444;font-weight:normal;transform:scaleX(0.7869);">Styles</div>
<div class="t" style="left:891.00px;top:127.00px;font-size:9.80px;line-height:9.80px;color:#444;font-weight:normal;transform:scaleX(0.7346);">Cells</div>
<svg class="b" style="left:133.00px;top:128.50px" width="7" height="7" viewBox="0 0 7 7"><path d="M0.5 4 V0.5 H4" fill="none" stroke="#666" stroke-width="0.9"/><path d="M2.5 2.5 L6.3 6.3 M3.2 6.3 H6.3 V3.2" fill="none" stroke="#666" stroke-width="0.9"/></svg>
<svg class="b" style="left:317.00px;top:128.50px" width="7" height="7" viewBox="0 0 7 7"><path d="M0.5 4 V0.5 H4" fill="none" stroke="#666" stroke-width="0.9"/><path d="M2.5 2.5 L6.3 6.3 M3.2 6.3 H6.3 V3.2" fill="none" stroke="#666" stroke-width="0.9"/></svg>
<svg class="b" style="left:552.00px;top:128.50px" width="7" height="7" viewBox="0 0 7 7"><path d="M0.5 4 V0.5 H4" fill="none" stroke="#666" stroke-width="0.9"/><path d="M2.5 2.5 L6.3 6.3 M3.2 6.3 H6.3 V3.2" fill="none" stroke="#666" stroke-width="0.9"/></svg>
<svg class="b" style="left:678.00px;top:128.50px" width="7" height="7" viewBox="0 0 7 7"><path d="M0.5 4 V0.5 H4" fill="none" stroke="#666" stroke-width="0.9"/><path d="M2.5 2.5 L6.3 6.3 M3.2 6.3 H6.3 V3.2" fill="none" stroke="#666" stroke-width="0.9"/></svg>
<svg class="b" style="left:22.00px;top:67.00px" width="25" height="26" viewBox="0 0 25 26"><rect x="1.5" y="3.5" width="15" height="19.5" rx="1" fill="#fff" stroke="#e8912d" stroke-width="2"/><path d="M5 5.5 V2.5 H7.5 C7.8 0.8 10.2 0.8 10.5 2.5 H13 V5.5 Z" fill="#f4f4f4" stroke="#777" stroke-width="1"/><rect x="12" y="10.5" width="11.5" height="14" fill="#f4f4f4" stroke="#666" stroke-width="1.4"/></svg>
<div class="t" style="left:21.70px;top:96.48px;font-size:10.30px;line-height:10.30px;color:#383838;font-weight:normal;transform:scaleX(0.7973);">Paste</div>
<svg class="b" style="left:29.00px;top:110.70px" width="5" height="2.5" viewBox="0 0 5 2.5"><path d="M0.6 0.6 L2.5 2.3 L4.4 0.6" fill="none" stroke="#505050" stroke-width="1.3" stroke-linecap="round" stroke-linejoin="round"/></svg>
<svg class="b" style="left:54.00px;top:67.00px" width="10" height="13" viewBox="0 0 10 13"><path d="M1.5 0.5 L7 9 M8.5 0.5 L3 9" stroke="#555" stroke-width="1"/><circle cx="2.6" cy="10.5" r="1.6" fill="none" stroke="#2f8ad8" stroke-width="1.2"/><circle cx="7.4" cy="10.5" r="1.6" fill="none" stroke="#2f8ad8" stroke-width="1.2"/></svg>
<div class="t" style="left:68.90px;top:69.68px;font-size:10.30px;line-height:10.30px;color:#383838;font-weight:normal;transform:scaleX(0.8360);">Cut</div>
<svg class="b" style="left:52.50px;top:87.00px" width="14" height="14" viewBox="0 0 14 14"><path d="M4 12.5 H1 V1 H6.5 L8 2.5" fill="none" stroke="#555" stroke-width="1"/><path d="M4.5 4 H10 L12.8 6.8 V13 H4.5 Z" fill="#fff" stroke="#555" stroke-width="1"/><path d="M6.5 8.5 H10.5 M6.5 10.5 H10.5" stroke="#777" stroke-width="0.8"/></svg>
<div class="t" style="left:68.90px;top:90.28px;font-size:10.30px;line-height:10.30px;color:#383838;font-weight:normal;transform:scaleX(0.8734);">Copy</div>
<svg class="b" style="left:102.50px;top:92.70px" width="5.5" height="2.75" viewBox="0 0 5.5 2.75"><path d="M0.6 0.6 L2.75 2.55 L4.9 0.6" fill="none" stroke="#505050" stroke-width="1.3" stroke-linecap="round" stroke-linejoin="round"/></svg>
<svg class="b" style="left:52.50px;top:107.00px" width="13" height="13" viewBox="0 0 13 13"><path d="M1 7.5 L6 4 L9.5 8.5 L5.5 12 Z" fill="#e8822a"/><path d="M2.5 8 L6 5.5" stroke="#fff" stroke-width="0.8"/><path d="M6.5 4.5 L9.5 1.5 L11.8 3.8 L8.8 7" fill="none" stroke="#555" stroke-width="1"/><path d="M9.6 2.2 L12 0" stroke="#555" stroke-width="1"/></svg>
<div class="t" style="left:68.90px;top:109.88px;font-size:10.30px;line-height:10.30px;color:#383838;font-weight:normal;transform:scaleX(0.8794);">Format Painter</div>
<div class="b" style="left:149.30px;top:70.30px;width:89.40px;height:19.20px;background:#fff;border:1px solid #8e8e8e;border-radius:3px"></div>
<div class="t" style="left:151.80px;top:75.91px;font-size:10.50px;line-height:10.50px;color:#383838;font-weight:normal;transform:scaleX(0.8805);">Calibri</div>
<svg class="b" style="left:229.80px;top:77.70px" width="5.5" height="2.75" viewBox="0 0 5.5 2.75"><path d="M0.6 0.6 L2.75 2.55 L4.9 0.6" fill="none" stroke="#505050" stroke-width="1.3" stroke-linecap="round" stroke-linejoin="round"/></svg>
<div class="b" style="left:240.80px;top:70.30px;width:38.90px;height:19.20px;background:#fff;border:1px solid #8e8e8e;border-radius:3px"></div>
<div class="t" style="left:242.50px;top:75.91px;font-size:10.50px;line-height:10.50px;color:#383838;font-weight:normal;transform:scaleX(0.8562);">12</div>
<svg class="b" style="left:271.50px;top:77.70px" width="5.5" height="2.75" viewBox="0 0 5.5 2.75"><path d="M0.6 0.6 L2.75 2.55 L4.9 0.6" fill="none" stroke="#505050" stroke-width="1.3" stroke-linecap="round" stroke-linejoin="round"/></svg>
<div class="t" style="left:285.00px;top:74.29px;font-size:13.00px;line-height:13.00px;color:#444;font-weight:normal;transform:scaleX(1.1533);">A</div>
<svg class="b" style="left:294.00px;top:75.00px" width="5" height="3" viewBox="0 0 5 3"><path d="M0.5 2.5 L2.5 0.5 L4.5 2.5" fill="none" stroke="#2f8ad8" stroke-width="0.9"/></svg>
<div class="t" style="left:306.00px;top:76.41px;font-size:10.50px;line-height:10.50px;color:#444;font-weight:normal;transform:scaleX(1.2137);">A</div>
<svg class="b" style="left:313.50px;top:75.00px" width="5" height="3" viewBox="0 0 5 3"><path d="M0.5 0.5 L2.5 2.5 L4.5 0.5" fill="none" stroke="#2f8ad8" stroke-width="0.9"/></svg>
<div class="t" style="left:156.00px;top:101.49px;font-size:11.00px;line-height:11.00px;color:#333;font-weight:bold;transform:scaleX(0.8182);">B</div>
<div class="t" style="left:175.50px;top:100.56px;font-size:11.50px;line-height:11.50px;color:#555;font-weight:normal;transform:scaleX(1.7214);font-family:'Liberation Serif',serif;font-style:italic;">I</div>
<div class="t" style="left:195.00px;top:101.41px;font-size:10.50px;line-height:10.50px;color:#444;font-weight:normal;transform:scaleX(0.9891);">U</div>
<div class="b" style="left:195.00px;top:111.80px;width:7.50px;height:1.00px;background:#555"></div>
<svg class="b" style="left:210.50px;top:103.70px" width="5.5" height="2.75" viewBox="0 0 5.5 2.75"><path d="M0.6 0.6 L2.75 2.55 L4.9 0.6" fill="none" stroke="#505050" stroke-width="1.3" stroke-linecap="round" stroke-linejoin="round"/></svg>
<div class="b" style="left:221.50px;top:96.00px;width:1.00px;height:18.00px;background:#e0e0e0"></div>
<svg class="b" style="left:226.50px;top:98.00px" width="12.5" height="12.5" viewBox="0 0 12.5 12.5"><rect x="0.5" y="0.5" width="11.5" height="11.5" fill="none" stroke="#7a7a7a" stroke-width="1"/><path d="M6.25 0.5 V12 M0.5 6.25 H12" stroke="#7a7a7a" stroke-width="1"/><path d="M0.5 12 H12" stroke="#555" stroke-width="1.2"/></svg>
<svg class="b" style="left:244.50px;top:103.70px" width="5.5" height="2.75" viewBox="0 0 5.5 2.75"><path d="M0.6 0.6 L2.75 2.55 L4.9 0.6" fill="none" stroke="#505050" stroke-width="1.3" stroke-linecap="round" stroke-linejoin="round"/></svg>
<div class="b" style="left:255.50px;top:96.00px;width:1.00px;height:18.00px;background:#e0e0e0"></div>
<svg class="b" style="left:259.50px;top:96.50px" width="13" height="15" viewBox="0 0 13 15"><path d="M2 6 L6 2 L10 6 L6 10 Z" fill="none" stroke="#444" stroke-width="1"/><path d="M10 5.5 C11.5 6.5 12 8 11.5 9.5" fill="none" stroke="#2f6fb8" stroke-width="1.2"/><rect x="1" y="11.5" width="12" height="3" fill="#ffee00"/></svg>
<svg class="b" style="left:279.50px;top:103.70px" width="5.5" height="2.75" viewBox="0 0 5.5 2.75"><path d="M0.6 0.6 L2.75 2.55 L4.9 0.6" fill="none" stroke="#505050" stroke-width="1.3" stroke-linecap="round" stroke-linejoin="round"/></svg>
<svg class="b" style="left:293.00px;top:99.50px" width="10.5" height="8" viewBox="0 0 10.5 8"><path d="M0.6 7.8 L5.2 0.6 L9.8 7.8 M2.4 5 H8" fill="none" stroke="#4a4a4a" stroke-width="1.05"/></svg>
<div class="b" style="left:292.50px;top:108.60px;width:12.80px;height:2.60px;background:#e6141e"></div>
<svg class="b" style="left:310.50px;top:103.70px" width="5.5" height="2.75" viewBox="0 0 5.5 2.75"><path d="M0.6 0.6 L2.75 2.55 L4.9 0.6" fill="none" stroke="#505050" stroke-width="1.3" stroke-linecap="round" stroke-linejoin="round"/></svg>
<div class="b" style="left:337.00px;top:73.00px;width:11.00px;height:1.00px;background:#666"></div>
<div class="b" style="left:339.00px;top:76.00px;width:7.00px;height:1.00px;background:#666"></div>
<div class="b" style="left:337.00px;top:80.00px;width:11.00px;height:1.00px;background:#666"></div>
<div class="b" style="left:357.00px;top:76.00px;width:11.00px;height:1.00px;background:#666"></div>
<div class="b" style="left:359.00px;top:79.00px;width:7.00px;height:1.00px;background:#666"></div>
<div class="b" style="left:357.00px;top:82.00px;width:11.00px;height:1.00px;background:#666"></div>
<div class="b" style="left:373.20px;top:70.20px;width:18.80px;height:19.50px;background:#e6e6e6;border:1px solid #9a9a9a;border-radius:3px"></div>
<div class="b" style="left:377.00px;top:79.00px;width:11.00px;height:1.00px;background:#666"></div>
<div class="b" style="left:379.00px;top:82.00px;width:7.00px;height:1.00px;background:#666"></div>
<div class="b" style="left:377.00px;top:85.00px;width:11.00px;height:1.00px;background:#666"></div>
<div class="b" style="left:393.80px;top:71.00px;width:1.00px;height:18.00px;background:#e0e0e0"></div>
<svg class="b" style="left:398.00px;top:72.00px" width="15" height="14" viewBox="0 0 15 14"><text x="-1" y="9" font-size="7.5" font-family="Liberation Sans" fill="#5a5a5a" transform="rotate(-45 3 6)">ab</text><path d="M4.5 13.5 L12.5 5" fill="none" stroke="#2f8ad8" stroke-width="1.1"/><path d="M9.2 4.2 L13.4 3.6 L12.8 7.8 Z" fill="#2f8ad8"/></svg>
<svg class="b" style="left:415.50px;top:77.70px" width="5.5" height="2.75" viewBox="0 0 5.5 2.75"><path d="M0.6 0.6 L2.75 2.55 L4.9 0.6" fill="none" stroke="#505050" stroke-width="1.3" stroke-linecap="round" stroke-linejoin="round"/></svg>
<div class="b" style="left:438.80px;top:70.00px;width:1.00px;height:48.00px;background:#e1e1e1"></div>
<div class="b" style="left:337.00px;top:99.00px;width:11.00px;height:1.00px;background:#666"></div>
<div class="b" style="left:357.00px;top:99.00px;width:11.00px;height:1.00px;background:#666"></div>
<div class="b" style="left:378.00px;top:99.00px;width:11.00px;height:1.00px;background:#666"></div>
<div class="b" style="left:337.00px;top:103.00px;width:8.00px;height:1.00px;background:#666"></div>
<div class="b" style="left:359.00px;top:103.00px;width:7.00px;height:1.00px;background:#666"></div>
<div class="b" style="left:380.00px;top:103.00px;width:8.00px;height:1.00px;background:#666"></div>
<div class="b" style="left:337.00px;top:106.00px;width:11.00px;height:1.00px;background:#666"></div>
<div class="b" style="left:357.00px;top:106.00px;width:11.00px;height:1.00px;background:#666"></div>
<div class="b" style="left:378.00px;top:106.00px;width:11.00px;height:1.00px;background:#666"></div>
<div class="b" style="left:337.00px;top:109.00px;width:8.00px;height:1.00px;background:#666"></div>
<div class="b" style="left:359.00px;top:109.00px;width:7.00px;height:1.00px;background:#666"></div>
<div class="b" style="left:380.00px;top:109.00px;width:8.00px;height:1.00px;background:#666"></div>
<div class="b" style="left:393.80px;top:96.00px;width:1.00px;height:18.00px;background:#e0e0e0"></div>
<div class="b" style="left:398.00px;top:99.00px;width:11.00px;height:1.00px;background:#666"></div>
<div class="b" style="left:404.00px;top:103.00px;width:5.00px;height:1.00px;background:#666"></div>
<div class="b" style="left:404.00px;top:106.00px;width:5.00px;height:1.00px;background:#666"></div>
<div class="b" style="left:398.00px;top:109.00px;width:11.00px;height:1.00px;background:#666"></div>
<div class="b" style="left:419.00px;top:99.00px;width:11.00px;height:1.00px;background:#666"></div>
<div class="b" style="left:425.00px;top:103.00px;width:5.00px;height:1.00px;background:#666"></div>
<div class="b" style="left:425.00px;top:106.00px;width:5.00px;height:1.00px;background:#666"></div>
<div class="b" style="left:419.00px;top:109.00px;width:11.00px;height:1.00px;background:#666"></div>
<svg class="b" style="left:398.50px;top:101.00px" width="6" height="6" viewBox="0 0 6 6"><path d="M0.8 3 H5.5 M2.8 1 L0.8 3 L2.8 5" fill="none" stroke="#2f8ad8" stroke-width="1.2"/></svg>
<svg class="b" style="left:419.00px;top:101.00px" width="6" height="6" viewBox="0 0 6 6"><path d="M0.3 3 H5 M3 1 L5 3 L3 5" fill="none" stroke="#2f8ad8" stroke-width="1.2"/></svg>
<svg class="b" style="left:447.50px;top:73.50px" width="14" height="14" viewBox="0 0 14 14"><text x="0" y="6" font-size="6.5" font-family="Liberation Sans" fill="#555">ab</text><text x="0" y="12.5" font-size="6.5" font-family="Liberation Sans" fill="#555">c</text><path d="M9 7 H11 C13 7 13 11 11 11 H6.5 M8.5 9 L6.5 11 L8.5 13" fill="none" stroke="#2f8ad8" stroke-width="1"/></svg>
<div class="t" style="left:462.70px;top:76.58px;font-size:10.30px;line-height:10.30px;color:#383838;font-weight:normal;transform:scaleX(0.8800);">Wrap Text</div>
<svg class="b" style="left:447.00px;top:98.00px" width="12" height="12.5" viewBox="0 0 12 12.5"><rect x="0.5" y="0.5" width="11" height="11.5" fill="#fff" stroke="#555" stroke-width="1"/><rect x="1" y="3" width="10" height="6.5" fill="#4a9be0"/><path d="M6 0.5 V3 M6 9.5 V12 M1 9.5 H11" stroke="#888" stroke-width="0.8"/><path d="M2.8 6.2 H9.2 M4.3 4.8 L2.8 6.2 L4.3 7.6 M7.7 4.8 L9.2 6.2 L7.7 7.6" fill="none" stroke="#fff" stroke-width="0.9"/></svg>
<div class="t" style="left:462.70px;top:101.58px;font-size:10.30px;line-height:10.30px;color:#383838;font-weight:normal;transform:scaleX(0.9119);">Merge &amp; Center</div>
<svg class="b" style="left:542.50px;top:103.70px" width="5.5" height="2.75" viewBox="0 0 5.5 2.75"><path d="M0.6 0.6 L2.75 2.55 L4.9 0.6" fill="none" stroke="#505050" stroke-width="1.3" stroke-linecap="round" stroke-linejoin="round"/></svg>
<div class="b" style="left:568.20px;top:70.20px;width:113.50px;height:19.10px;background:#fff;border:1px solid #8e8e8e;border-radius:3px"></div>
<div class="t" style="left:571.00px;top:75.91px;font-size:10.50px;line-height:10.50px;color:#383838;font-weight:normal;transform:scaleX(0.8570);">Text</div>
<svg class="b" style="left:673.50px;top:77.70px" width="5.5" height="2.75" viewBox="0 0 5.5 2.75"><path d="M0.6 0.6 L2.75 2.55 L4.9 0.6" fill="none" stroke="#505050" stroke-width="1.3" stroke-linecap="round" stroke-linejoin="round"/></svg>
<div class="t" style="left:574.00px;top:99.59px;font-size:13.00px;line-height:13.00px;color:#444;font-weight:normal;transform:scaleX(0.9682);">$</div>
<svg class="b" style="left:589.50px;top:103.70px" width="5.5" height="2.75" viewBox="0 0 5.5 2.75"><path d="M0.6 0.6 L2.75 2.55 L4.9 0.6" fill="none" stroke="#505050" stroke-width="1.3" stroke-linecap="round" stroke-linejoin="round"/></svg>
<div class="t" style="left:603.50px;top:99.59px;font-size:13.00px;line-height:13.00px;color:#444;font-weight:normal;transform:scaleX(1.0814);">%</div>
<svg class="b" style="left:626.00px;top:100.00px" width="9" height="13" viewBox="0 0 9 13"><circle cx="5" cy="4.3" r="2.9" fill="#333"/><path d="M7.6 4.5 C7.8 8 6 10.5 2.8 11.8" fill="none" stroke="#333" stroke-width="1.9"/></svg>
<div class="b" style="left:642.00px;top:96.00px;width:1.00px;height:18.00px;background:#e0e0e0"></div>
<svg class="b" style="left:645.00px;top:98.00px" width="14" height="14" viewBox="0 0 14 14"><path d="M0.8 5 H6.5 M3 2.6 L0.8 5 L3 7.4" fill="none" stroke="#2f8ad8" stroke-width="1.2"/><text x="8.2" y="6.6" font-size="7.5" font-family="Liberation Sans" fill="#555">0</text><text x="3.2" y="12.8" font-size="7.5" font-family="Liberation Sans" fill="#555" textLength="10" lengthAdjust="spacingAndGlyphs">.00</text></svg>
<svg class="b" style="left:665.00px;top:98.00px" width="14" height="14" viewBox="0 0 14 14"><text x="3.2" y="6.6" font-size="7.5" font-family="Liberation Sans" fill="#555" textLength="10" lengthAdjust="spacingAndGlyphs">.00</text><path d="M0.5 10 H6.8 M4.6 7.6 L6.8 10 L4.6 12.4" fill="none" stroke="#2f8ad8" stroke-width="1.2"/><text x="7" y="12.8" font-size="7.5" font-family="Liberation Sans" fill="#555">.0</text></svg>
<svg class="b" style="left:711.50px;top:70.00px" width="23" height="18.5" viewBox="0 0 23 18.5"><rect x="0.6" y="0.6" width="21.6" height="17" fill="#fff"/><path d="M4.7 0.6 V17.6 M18 0.6 V17.6 M0.6 6.2 H22.2 M0.6 11.5 H22.2" stroke="#7a7a7a" stroke-width="1"/><rect x="0.6" y="0.6" width="21.6" height="17" fill="none" stroke="#5f5f5f" stroke-width="1.2" rx="0.8"/><rect x="4.8" y="0.8" width="9.6" height="5.5" fill="#f7848c" stroke="#de4a52" stroke-width="1"/><rect x="4.8" y="6.3" width="6.4" height="5.2" fill="#7ab8ec" stroke="#2a7fd0" stroke-width="1"/><rect x="4.8" y="11.5" width="11.2" height="6" fill="#f7848c" stroke="#de4a52" stroke-width="1"/></svg>
<svg class="b" style="left:764.50px;top:70.50px" width="27" height="23" viewBox="0 0 27 23"><rect x="0.5" y="0.5" width="21.5" height="16.8" fill="#fff"/><rect x="7.5" y="6" width="14.8" height="11.3" fill="#74b3ea"/><path d="M7.5 0.5 V17.3 M15 0.5 V17.3 M0.5 6 H22 M0.5 11.5 H22" stroke="#707070" stroke-width="1"/><path d="M22 12 V0.5 H0.5 V17.3 H10" fill="none" stroke="#5f5f5f" stroke-width="1.2"/><path d="M23.5 6.5 C24.3 5.7 25.5 6.9 24.7 7.7 L16.6 16.2 L14.9 14.6 Z" fill="#fff" stroke="#6a6a6a" stroke-width="1.1" stroke-linejoin="round"/><path d="M14.6 14.4 C12.2 14.2 10.6 15.6 10.2 17.6 C9.9 19.2 8.6 20.3 6.8 20.9 C10.5 21.8 15.6 20.7 16.8 16.6 Z" fill="#5aa5e6" stroke="#2f7fd0" stroke-width="0.8"/></svg>
<svg class="b" style="left:806.50px;top:70.50px" width="27" height="23" viewBox="0 0 27 23"><rect x="0.5" y="0.5" width="21.5" height="16.8" fill="#fff"/><rect x="5" y="3.3" width="14.2" height="9.5" fill="#74b3ea" stroke="#2f7fd0" stroke-width="0.8"/><path d="M5 0.5 V17.3 M0.5 3.3 H22 M0.5 12.8 H5" stroke="#707070" stroke-width="1"/><path d="M19.2 0.5 V3.3" stroke="#707070" stroke-width="1"/><path d="M22 12 V0.5 H0.5 V17.3 H10" fill="none" stroke="#5f5f5f" stroke-width="1.2"/><path d="M23.5 6.5 C24.3 5.7 25.5 6.9 24.7 7.7 L16.6 16.2 L14.9 14.6 Z" fill="#fff" stroke="#6a6a6a" stroke-width="1.1" stroke-linejoin="round"/><path d="M14.6 14.4 C12.2 14.2 10.6 15.6 10.2 17.6 C9.9 19.2 8.6 20.3 6.8 20.9 C10.5 21.8 15.6 20.7 16.8 16.6 Z" fill="#5aa5e6" stroke="#2f7fd0" stroke-width="0.8"/></svg>
<div class="t" style="left:699.60px;top:95.38px;font-size:10.30px;line-height:10.30px;color:#383838;font-weight:normal;transform:scaleX(0.9333);">Conditional</div>
<div class="t" style="left:696.40px;top:107.68px;font-size:10.30px;line-height:10.30px;color:#383838;font-weight:normal;transform:scaleX(0.9162);">Formatting</div>
<svg class="b" style="left:745.00px;top:109.70px" width="4.5" height="2.25" viewBox="0 0 4.5 2.25"><path d="M0.6 0.6 L2.25 2.05 L3.9 0.6" fill="none" stroke="#505050" stroke-width="1.3" stroke-linecap="round" stroke-linejoin="round"/></svg>
<div class="t" style="left:756.00px;top:95.38px;font-size:10.30px;line-height:10.30px;color:#383838;font-weight:normal;transform:scaleX(0.8844);">Format as</div>
<div class="t" style="left:761.00px;top:107.68px;font-size:10.30px;line-height:10.30px;color:#383838;font-weight:normal;transform:scaleX(0.8539);">Table</div>
<svg class="b" style="left:786.00px;top:109.70px" width="4.5" height="2.25" viewBox="0 0 4.5 2.25"><path d="M0.6 0.6 L2.25 2.05 L3.9 0.6" fill="none" stroke="#505050" stroke-width="1.3" stroke-linecap="round" stroke-linejoin="round"/></svg>
<div class="t" style="left:810.00px;top:95.38px;font-size:10.30px;line-height:10.30px;color:#383838;font-weight:normal;transform:scaleX(0.9017);">Cell</div>
<div class="t" style="left:801.00px;top:107.68px;font-size:10.30px;line-height:10.30px;color:#383838;font-weight:normal;transform:scaleX(0.9626);">Styles</div>
<svg class="b" style="left:830.50px;top:109.70px" width="4.5" height="2.25" viewBox="0 0 4.5 2.25"><path d="M0.6 0.6 L2.25 2.05 L3.9 0.6" fill="none" stroke="#505050" stroke-width="1.3" stroke-linecap="round" stroke-linejoin="round"/></svg>
<svg class="b" style="left:852.00px;top:70.00px" width="26" height="18.5" viewBox="0 0 26 18.5"><rect x="2.5" y="0.5" width="22" height="17" fill="#fff"/><path d="M9.5 0.5 V17.5" stroke="#707070" stroke-width="1"/><path d="M17.5 0.5 V17.5" stroke="#707070" stroke-width="1"/><path d="M0.5 6.2 H24.5" stroke="#707070" stroke-width="1"/><path d="M0.5 12.2 H24.5" stroke="#707070" stroke-width="1"/><rect x="0.5" y="0.5" width="24" height="17" fill="none" stroke="#5f5f5f" stroke-width="1.2" rx="0.8"/><rect x="6" y="6.2" width="19.5" height="6" fill="#74b3ea" stroke="#2f7fd0" stroke-width="1"/><path d="M1 9.2 L6.2 4 V7.2 H12 V11.2 H6.2 V14.4 Z" fill="#e8f3fc" stroke="#3c95e0" stroke-width="1" stroke-linejoin="round"/></svg>
<svg class="b" style="left:888.00px;top:70.50px" width="25" height="18" viewBox="0 0 25 18"><rect x="0.5" y="0.5" width="22" height="16.5" fill="#fff"/><path d="M7.5 0.5 V17" stroke="#707070" stroke-width="1"/><path d="M15 0.5 V17" stroke="#707070" stroke-width="1"/><path d="M0.5 6 H22.5" stroke="#707070" stroke-width="1"/><path d="M0.5 12 H22.5" stroke="#707070" stroke-width="1"/><rect x="0.5" y="0.5" width="22" height="16.5" fill="none" stroke="#5f5f5f" stroke-width="1.2" rx="0.8"/><path d="M3 6 H14.5 L16.5 9 L14.5 12 H3 Z" fill="#74b3ea" stroke="#2f7fd0" stroke-width="1"/><path d="M14.5 4.2 L23.5 14 M23.5 4.2 L14.5 14" stroke="#ef5a60" stroke-width="1.1"/></svg>
<svg class="b" style="left:922.00px;top:70.50px" width="23" height="18" viewBox="0 0 23 18"><rect x="0.5" y="0.5" width="21.5" height="16.5" fill="#fff"/><path d="M7.2 0.5 V17" stroke="#707070" stroke-width="1"/><path d="M15.3 0.5 V17" stroke="#707070" stroke-width="1"/><path d="M0.5 6 H22" stroke="#707070" stroke-width="1"/><path d="M0.5 12 H22" stroke="#707070" stroke-width="1"/><rect x="0.5" y="0.5" width="21.5" height="16.5" fill="none" stroke="#5f5f5f" stroke-width="1.2" rx="0.8"/><rect x="6.5" y="6" width="9.5" height="6" fill="#74b3ea" stroke="#2f7fd0" stroke-width="1"/></svg>
<svg class="b" style="left:927.00px;top:66.50px" width="14" height="3" viewBox="0 0 14 3"><path d="M0.8 1.3 H13" stroke="#3c95e0" stroke-width="1.1"/><path d="M0.8 0 V2.6 M13 0 V2.6" stroke="#3c95e0" stroke-width="0.9"/></svg>
<div class="t" style="left:854.50px;top:96.08px;font-size:10.30px;line-height:10.30px;color:#383838;font-weight:normal;transform:scaleX(0.8540);">Insert</div>
<svg class="b" style="left:862.50px;top:110.20px" width="5" height="2.5" viewBox="0 0 5 2.5"><path d="M0.6 0.6 L2.5 2.3 L4.4 0.6" fill="none" stroke="#505050" stroke-width="1.3" stroke-linecap="round" stroke-linejoin="round"/></svg>
<div class="t" style="left:886.00px;top:96.08px;font-size:10.30px;line-height:10.30px;color:#383838;font-weight:normal;transform:scaleX(0.9068);">Delete</div>
<svg class="b" style="left:897.00px;top:110.20px" width="5" height="2.5" viewBox="0 0 5 2.5"><path d="M0.6 0.6 L2.5 2.3 L4.4 0.6" fill="none" stroke="#505050" stroke-width="1.3" stroke-linecap="round" stroke-linejoin="round"/></svg>
<div class="t" style="left:919.00px;top:95.08px;font-size:10.30px;line-height:10.30px;color:#383838;font-weight:normal;transform:scaleX(0.8890);">Format</div>
<svg class="b" style="left:931.00px;top:109.20px" width="5" height="2.5" viewBox="0 0 5 2.5"><path d="M0.6 0.6 L2.5 2.3 L4.4 0.6" fill="none" stroke="#505050" stroke-width="1.3" stroke-linecap="round" stroke-linejoin="round"/></svg>
<svg class="b" style="left:967.00px;top:68.00px" width="10.5" height="11" viewBox="0 0 10.5 11"><path d="M9.8 1.8 V0.6 H0.8 L5.6 5.5 L0.8 10.4 H9.8 V9.2" fill="none" stroke="#4a4a4a" stroke-width="1.1" stroke-linejoin="miter"/></svg>
<div class="t" style="left:982.00px;top:69.68px;font-size:10.30px;line-height:10.30px;color:#383838;font-weight:normal;transform:scaleX(0.8875);">AutoSum</div>
<svg class="b" style="left:966.00px;top:88.00px" width="13" height="12" viewBox="0 0 13 12"><rect x="0.5" y="0.5" width="12" height="11" fill="#fff" stroke="#555" stroke-width="1"/><path d="M0.5 2.5 H12.5" stroke="#555" stroke-width="1"/><path d="M6.5 4 V9.5 M4.5 7.5 L6.5 9.5 L8.5 7.5" fill="none" stroke="#2f8ad8" stroke-width="1.1"/></svg>
<div class="t" style="left:982.00px;top:90.08px;font-size:10.30px;line-height:10.30px;color:#383838;font-weight:normal;transform:scaleX(0.8361);">Fill</div>
<svg class="b" style="left:997.00px;top:92.20px" width="5" height="2.5" viewBox="0 0 5 2.5"><path d="M0.6 0.6 L2.5 2.3 L4.4 0.6" fill="none" stroke="#505050" stroke-width="1.3" stroke-linecap="round" stroke-linejoin="round"/></svg>
<svg class="b" style="left:965.50px;top:107.50px" width="14" height="14" viewBox="0 0 14 14"><path d="M1 8.5 L7.5 2 L12.5 6.5 L6 13 Z" fill="none" stroke="#b146c2" stroke-width="1.3"/><path d="M1 8.5 L3.8 5.7 L8.5 10.5 L6 13 Z" fill="#b146c2"/></svg>
<div class="t" style="left:982.00px;top:110.38px;font-size:10.30px;line-height:10.30px;color:#383838;font-weight:normal;transform:scaleX(0.8532);">Clear</div>
<svg class="b" style="left:1007.00px;top:112.20px" width="5" height="2.5" viewBox="0 0 5 2.5"><path d="M0.6 0.6 L2.5 2.3 L4.4 0.6" fill="none" stroke="#505050" stroke-width="1.3" stroke-linecap="round" stroke-linejoin="round"/></svg>
<div class="b" style="left:6.60px;top:146.80px;width:79.00px;height:17.60px;background:#fff;border:1px solid #d8dbdf;border-radius:4px"></div>
<div class="t" style="left:10.80px;top:151.29px;font-size:11.00px;line-height:11.00px;color:#333;font-weight:normal;transform:scaleX(0.9168);">D13</div>
<svg class="b" style="left:74.00px;top:152.70px" width="7.5" height="3.75" viewBox="0 0 7.5 3.75"><path d="M0.6 0.6 L3.75 3.55 L6.9 0.6" fill="none" stroke="#444" stroke-width="1.1" stroke-linecap="round" stroke-linejoin="round"/></svg>
<div class="b" style="left:93.00px;top:152.00px;width:2.00px;height:2.00px;background:#555;border-radius:1px"></div>
<div class="b" style="left:93.00px;top:155.50px;width:2.00px;height:2.00px;background:#555;border-radius:1px"></div>
<div class="b" style="left:93.00px;top:159.00px;width:2.00px;height:2.00px;background:#555;border-radius:1px"></div>
<div class="b" style="left:103.00px;top:146.80px;width:56.00px;height:17.60px;background:#fff;border:1px solid #d8dbdf;border-radius:4px"></div>
<svg class="b" style="left:107.00px;top:150.50px" width="10" height="10" viewBox="0 0 10 10"><path d="M0.5 0.5 L9.5 9.5 M9.5 0.5 L0.5 9.5" stroke="#b8b8b8" stroke-width="1"/></svg>
<svg class="b" style="left:124.00px;top:151.00px" width="13" height="9" viewBox="0 0 13 9"><path d="M0.5 4.5 L4.5 8.5 L12.5 0.5" fill="none" stroke="#b8b8b8" stroke-width="1"/></svg>
<div class="t" style="left:144.00px;top:150.64px;font-size:12.00px;line-height:12.00px;color:#333;font-weight:normal;transform:scaleX(1.1785);font-family:'Liberation Serif',serif;font-style:italic;">fx</div>
<div class="b" style="left:163.50px;top:146.80px;width:900.00px;height:17.60px;background:#fff;border:1px solid #d8dbdf;border-radius:4px"></div>
<div class="t" style="left:171.00px;top:151.29px;font-size:11.00px;line-height:11.00px;color:#333;font-weight:normal;transform:scaleX(0.9175);">Child</div>
<div class="b" style="left:3.50px;top:171.00px;width:15.00px;height:16.00px;background:#e8e8e8;border:1px solid #9d9d9d;border-radius:1px"></div>
<div class="t" style="left:8.78px;top:177.03px;font-size:8.00px;line-height:8.00px;color:#555;font-weight:normal;">1</div>
<div class="b" style="left:3.50px;top:187.00px;width:15.00px;height:15.80px;background:#e8e8e8;border:1px solid #9d9d9d;border-radius:1px"></div>
<div class="t" style="left:8.78px;top:192.53px;font-size:8.00px;line-height:8.00px;color:#555;font-weight:normal;">2</div>
<div class="b" style="left:0.00px;top:600.50px;width:1024.00px;height:24.00px;background:#e5e7ec;box-shadow:inset 0 1px 0 #dcdee3"></div>
<div class="b" style="left:0.00px;top:624.50px;width:1024.00px;height:15.50px;background:#f4f4f4"></div>
<svg class="b" style="left:20.00px;top:606.00px" width="6" height="10" viewBox="0 0 6 10"><path d="M5 0.5 L0.8 5 L5 9.5" fill="none" stroke="#444" stroke-width="1.1"/></svg>
<svg class="b" style="left:46.00px;top:606.00px" width="6" height="10" viewBox="0 0 6 10"><path d="M1 0.5 L5.2 5 L1 9.5" fill="none" stroke="#9a9a9a" stroke-width="1.1"/></svg>
<div class="b" style="left:68.50px;top:610.00px;width:2.00px;height:2.00px;background:#333;border-radius:1px"></div>
<div class="b" style="left:71.80px;top:610.00px;width:2.00px;height:2.00px;background:#333;border-radius:1px"></div>
<div class="b" style="left:75.10px;top:610.00px;width:2.00px;height:2.00px;background:#333;border-radius:1px"></div>
<div class="t" style="left:95.00px;top:607.99px;font-size:11.00px;line-height:11.00px;color:#333;font-weight:normal;transform:scaleX(0.9703);">Images</div>
<div class="b" style="left:140.50px;top:605.00px;width:1.00px;height:14.00px;background:#cfd2d6"></div>
<div class="t" style="left:152.00px;top:607.99px;font-size:11.00px;line-height:11.00px;color:#333;font-weight:normal;transform:scaleX(0.9916);">Data Definitions</div>
<div class="b" style="left:240.50px;top:605.00px;width:1.00px;height:14.00px;background:#cfd2d6"></div>
<div class="b" style="left:244.00px;top:600.50px;width:59.00px;height:21.00px;background:#fff;border-radius:6px;box-shadow:0 0.5px 1px rgba(0,0,0,0.12)"></div>
<div class="t" style="left:251.00px;top:605.79px;font-size:11.00px;line-height:11.00px;color:#333;font-weight:bold;transform:scaleX(0.9525);">Template</div>
<div class="b" style="left:250.50px;top:618.00px;width:47.00px;height:2.20px;background:#2d8247;border-radius:1px"></div>
<div class="t" style="left:318.00px;top:607.99px;font-size:11.00px;line-height:11.00px;color:#333;font-weight:normal;transform:scaleX(0.9528);">Browse Data</div>
<div class="b" style="left:389.00px;top:605.00px;width:1.00px;height:14.00px;background:#cfd2d6"></div>
<div class="t" style="left:400.00px;top:607.99px;font-size:11.00px;line-height:11.00px;color:#333;font-weight:normal;transform:scaleX(0.9648);">Valid Values</div>
<div class="b" style="left:470.00px;top:605.00px;width:1.00px;height:14.00px;background:#cfd2d6"></div>
<svg class="b" style="left:502.50px;top:606.00px" width="9" height="9" viewBox="0 0 9 9"><path d="M4.5 0 V9 M0 4.5 H9" stroke="#333" stroke-width="1.1"/></svg>
<div class="b" style="left:726.50px;top:606.00px;width:2.00px;height:2.00px;background:#444;border-radius:1px"></div>
<div class="b" style="left:726.50px;top:609.50px;width:2.00px;height:2.00px;background:#444;border-radius:1px"></div>
<div class="b" style="left:726.50px;top:613.00px;width:2.00px;height:2.00px;background:#444;border-radius:1px"></div>
<div class="b" style="left:740.00px;top:605.00px;width:300.00px;height:12.50px;background:#fbfbfb;border-radius:6px"></div>
<svg class="b" style="left:744.00px;top:607.50px" width="5" height="7" viewBox="0 0 5 7"><path d="M4.5 0 V7 L0 3.5 Z" fill="#555"/></svg>
<div class="b" style="left:753.00px;top:607.50px;width:14.00px;height:7.00px;background:#777;border-radius:3.5px"></div>
<div class="t" style="left:9.00px;top:629.26px;font-size:9.50px;line-height:9.50px;color:#555;font-weight:normal;transform:scaleX(0.8011);">Ready</div>
<svg class="b" style="left:47.50px;top:625.50px" width="12" height="13" viewBox="0 0 12 13"><circle cx="6" cy="2.5" r="1.8" fill="none" stroke="#444" stroke-width="0.9"/><path d="M1 5 H11 M6 5 V8.5 L3 12.5 M6 8.5 L9 12.5" fill="none" stroke="#444" stroke-width="0.9"/></svg>
<div class="t" style="left:62.00px;top:629.26px;font-size:9.50px;line-height:9.50px;color:#222;font-weight:bold;transform:scaleX(0.8369);">Accessibility: Investigate</div>
<div class="b" style="left:973.00px;top:624.50px;width:32.00px;height:15.50px;background:#e0e0e0"></div>
<svg class="b" style="left:983.00px;top:626.00px" width="12" height="12" viewBox="0 0 12 12"><rect x="0.5" y="0.5" width="11" height="11" fill="none" stroke="#444" stroke-width="0.9"/><path d="M4 0.5 V11.5 M8 0.5 V11.5 M0.5 4 H11.5 M0.5 8 H11.5" stroke="#444" stroke-width="0.9"/></svg>
<svg class="b" style="left:1015.00px;top:626.00px" width="12" height="12" viewBox="0 0 12 12"><rect x="0.5" y="0.5" width="11" height="11" fill="none" stroke="#444" stroke-width="0.9"/><path d="M3 3 H9 V9 H3 Z" fill="none" stroke="#444" stroke-width="0.8"/></svg>
<div class="b" style="left:706.00px;top:426.60px;width:12.50px;height:12.80px;background:#f4f4f7;border:1px solid #d4d4d8;border-radius:1px;box-shadow:0 0 1px rgba(0,0,0,0.15)"></div>
<svg class="b" style="left:709.80px;top:431.50px" width="5" height="3" viewBox="0 0 5 3"><path d="M0 0 H5 L2.5 3 Z" fill="#555"/></svg>
</body></html>
